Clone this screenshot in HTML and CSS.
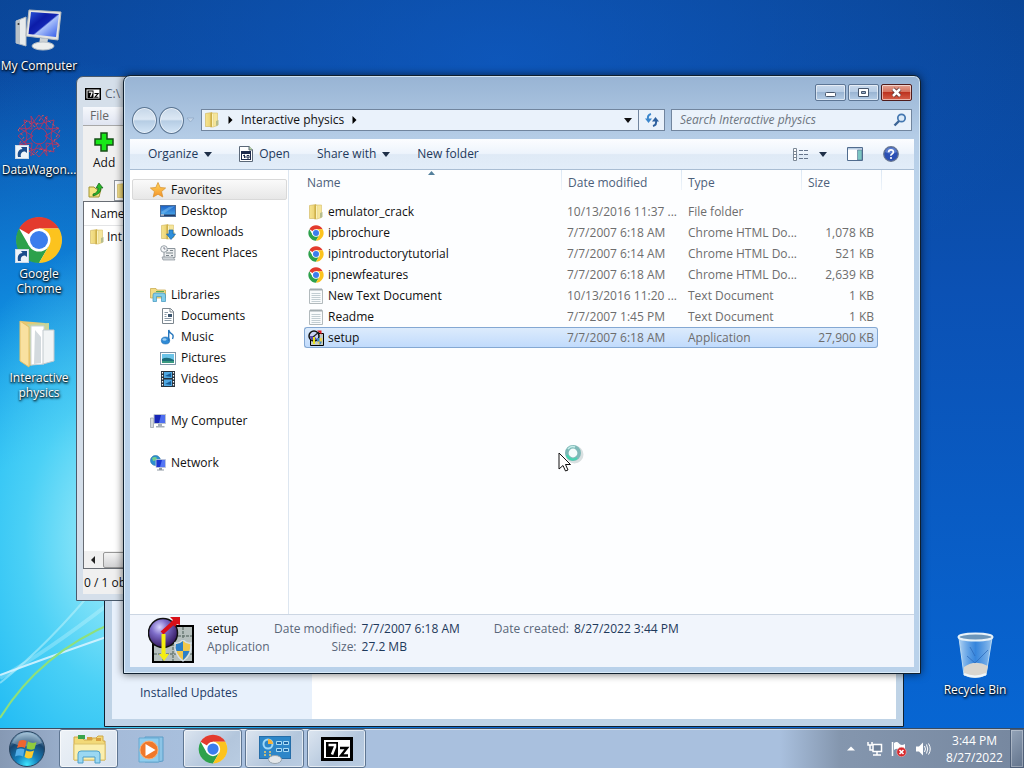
FILE: index.html
```
<!DOCTYPE html>
<html lang="en">
<head>
<meta charset="utf-8">
<title>Interactive physics</title>
<link rel="stylesheet" href="styles.css">
</head>
<body>
<svg class="sprite" width="0" height="0" aria-hidden="true">
  <defs>
    <linearGradient id="gFolder" x1="0" x2="1"><stop offset="0" stop-color="#f6e48e"/><stop offset=".6" stop-color="#eed77c"/><stop offset="1" stop-color="#dcc05c"/></linearGradient>
    <linearGradient id="gBlue" x1="0" y1="0" x2="1" y2="1"><stop offset="0" stop-color="#2a55d8"/><stop offset=".35" stop-color="#0c1ca8"/><stop offset=".52" stop-color="#1326b4"/><stop offset=".56" stop-color="#a9c0fa"/><stop offset="1" stop-color="#2e57e8"/></linearGradient>
    <linearGradient id="gSky" x1="0" y1="0" x2="0" y2="1"><stop offset="0" stop-color="#1c5fc4"/><stop offset="1" stop-color="#4fb0ee"/></linearGradient>
    <radialGradient id="gBall" cx=".38" cy=".3" r=".7"><stop offset="0" stop-color="#d8d4ff"/><stop offset=".4" stop-color="#7d6cc8"/><stop offset="1" stop-color="#33185e"/></radialGradient>
    <radialGradient id="gOrb" cx=".5" cy=".95" r=".9"><stop offset="0" stop-color="#3fe6ff"/><stop offset=".35" stop-color="#1481bd"/><stop offset=".75" stop-color="#17456f"/><stop offset="1" stop-color="#7fa6c4"/></radialGradient>
    <linearGradient id="gStar" x1="0" y1="0" x2="0" y2="1"><stop offset="0" stop-color="#ffd95c"/><stop offset="1" stop-color="#f5912a"/></linearGradient>
    <linearGradient id="gBin" x1="0" x2="1"><stop offset="0" stop-color="#d9eefc" stop-opacity=".8"/><stop offset=".5" stop-color="#6fb0ee" stop-opacity=".45"/><stop offset="1" stop-color="#c5e2f8" stop-opacity=".75"/></linearGradient>
  </defs>
  <symbol id="chrome" viewBox="0 0 48 48">
    <circle cx="24" cy="24" r="22.500" fill="#fff"/>
    <path d="M24 24L4.100 12.500A23 23 0 0 1 43.900 12.500L24 12.500Z" fill="#e33b2e"/>
    <path d="M4.100 12.500A23 23 0 0 0 24 47L34 29.800L24 24L14 29.800Z" fill="#2da14c"/>
    <path d="M43.900 12.500A23 23 0 0 1 24 47L34 29.800L24 12.500Z" fill="#fcc31e"/>
    <circle cx="24" cy="24" r="11.500" fill="#fff"/><circle cx="24" cy="24" r="9" fill="#3b7ded"/>
  </symbol>
  <symbol id="folder" viewBox="0 0 16 16">
    <path d="M7 1H13.500V13.500L9 15H7Z" fill="#f5e59a" stroke="#d9c06a" stroke-width=".6"/>
    <path d="M1.500 1.500L8 .5V14.500L1.500 14.500Z" fill="url(#gFolder)" stroke="#cfb45a" stroke-width=".6"/>
    <path d="M6.500 1V15.500L9.500 14V1.500Z" fill="#cdb04a"/><path d="M8 1.500H9.500V14L8 15Z" fill="#faf1bd"/>
    <path d="M12 9L14.500 8V13L12 14Z" fill="#b7bd8c"/>
  </symbol>
  <symbol id="textdoc" viewBox="0 0 16 16">
    <path d="M1.500 1.500H14.500V15.500H1.500Z" fill="#f9fbfc" stroke="#b2babd"/>
    <path d="M3 0V3M5 0V3M7 0V3M9 0V3M11 0V3M13 0V3" stroke="#8b979c" stroke-width=".8"/>
    <path d="M3.500 5.500H12.500M3.500 7.500H12.500M3.500 9.500H12.500M3.500 11.500H12.500M3.500 13.500H12.500" stroke="#b4c1c7" stroke-width=".8"/>
  </symbol>
  <symbol id="setup" viewBox="0 0 48 48">
    <rect x="5" y="10" width="40" height="36" fill="#b5bfbd" stroke="#000" stroke-width="2"/>
    <path d="M6 20H44M6 29H44M6 38H44M15 11V45M25 11V45M35 11V45" stroke="#6d7d78" stroke-width="1.500" stroke-dasharray="3 1"/>
    <circle cx="15" cy="17" r="14.500" fill="url(#gBall)" stroke="#111" stroke-width="1.500"/>
    <path d="M14 17L25 7" stroke="#d81018" stroke-width="4"/><path d="M22 1H32V9L29 8L27 11L23 6L25 4Z" fill="#d81018"/>
    <path d="M15.500 18V39" stroke="#f5ee10" stroke-width="4"/><path d="M11 38H21L16 45Z" fill="#f5ee10"/>
    <path d="M35 24Q39 28 43 27Q44 39 35 45Q26 39 27 27Q31 28 35 24Z" fill="#f2c84a" stroke="#d5dfe8" stroke-width="1.500"/>
    <path d="M35 25Q31 28.500 28 28Q27 32 28.500 35H35ZM35 35H41.500Q39 41 35 44Z" fill="#2c7fc9"/>
  </symbol>
  <symbol id="setup-small" viewBox="0 0 16 16">
    <path d="M2.500 3.500H15.500V15.500H2.500Z" fill="#c3cbc6" stroke="#000"/>
    <circle cx="6" cy="6" r="5" fill="#c9d2f4" stroke="#111" stroke-width="1.500"/><path d="M2 6A4 4 0 0 0 9 9L6 6Z" fill="#5b4aa8"/>
    <path d="M5 7L11 2" stroke="#222" stroke-width="1.200"/><path d="M9 .5H13.500V4.500Z" fill="#e01b22"/>
    <path d="M6 7V14" stroke="#e8e41a" stroke-width="2"/><path d="M9 8H14V12Q13 14 11.500 15Q9 13 9 8Z" fill="#f0d24a"/><path d="M9 8H11.500V11.500H14Q13 14 11.500 15V11.500H9Z" fill="#3a83c6"/>
  </symbol>
  <symbol id="pc" viewBox="0 0 48 44">
    <path d="M1 13L11 9V38L1 35Z" fill="#e8ebec" stroke="#b4bcc4"/><path d="M1 13L5 12V36L1 35Z" fill="#b9c1c8"/><circle cx="3.500" cy="16" r="1" fill="#333"/>
    <path d="M14 2L46 4L43 32L11 28Z" fill="#e4e5e3" stroke="#b8bcbe"/><path d="M16 4L44 6L41 29L13.500 26Z" fill="url(#gBlue)"/>
    <path d="M25 30L33 31L32 37H24Z" fill="#cdd2d5"/><ellipse cx="28" cy="38" rx="11" ry="4" fill="#eceeee" stroke="#b8c0c6"/>
  </symbol>
  <symbol id="shortcut" viewBox="0 0 14 14">
    <rect x=".5" y=".5" width="13" height="13" fill="#eef4fa" stroke="#cbd9e6"/><path d="M3 12C2 7 4 4 7.500 4L6 2H12V8L10 6.500C7 6.500 5 8.500 6 12Z" fill="#1c4e8c"/>
  </symbol>
  <symbol id="sevenz" viewBox="0 0 32 24">
    <rect x="1.500" y="1.500" width="29" height="21" fill="#fff" stroke="#000" stroke-width="3"/><rect x="5" y="5" width="12" height="15" fill="#000"/>
    <path d="M7.500 8H14V10L11 17.500" fill="none" stroke="#fff" stroke-width="2.500"/><path d="M19 11H26L20 18.500H27" fill="none" stroke="#000" stroke-width="2.400"/>
  </symbol>
</svg>

<main class="desktop">
  <svg class="wallpaper-streaks" viewBox="0 0 130 170" aria-hidden="true">
    <path d="M0 125Q50 85 98 26" stroke="#c6f6fc" stroke-opacity=".5" fill="none" stroke-width="2"/>
    <path d="M0 120Q45 95 110 45" stroke="#d7fbff" stroke-opacity=".3" fill="none" stroke-width="4"/>
    <path d="M0 117Q60 95 115 76" stroke="#d5f3ff" fill="none" stroke-width="2" stroke-opacity=".9"/>
    <path d="M0 160Q40 95 115 64" stroke="#8fe07a" fill="none" stroke-width="2"/>
  </svg>

  <nav class="shortcuts" aria-label="Desktop">
    <button class="shortcut"><span class="shortcut-art"><svg class="art-pc"><use href="#pc"/></svg></span><span>My Computer</span></button>
    <button class="shortcut"><span class="shortcut-art">
      <svg class="art" viewBox="0 0 48 48"><g fill="none" stroke="#a3396a" stroke-width="1">
        <path d="M24 3L35 17L45 24L33 34L24 45L13 34L3 24L15 15Z"/><path d="M9 8L24 12L39 8L36 24L39 40L24 36L9 40L12 24Z"/><path d="M16 4L24 18L32 4L31 17L44 16L30 24L44 33L31 31L32 44L24 31L16 44L17 31L4 33L18 24L4 16L17 17Z"/><circle cx="24" cy="24" r="8"/><path d="M3 18L12 9L20 15L28 3L36 11L45 18L39 29L45 33L34 40L25 37L19 43L10 36L4 32L9 25Z" stroke="#cc5060" stroke-dasharray="3 2"/></g></svg>
      <svg class="arrow"><use href="#shortcut"/></svg></span><span>DataWagon...</span></button>
    <button class="shortcut"><span class="shortcut-art"><svg class="art"><use href="#chrome"/></svg><svg class="arrow"><use href="#shortcut"/></svg></span><span>Google Chrome</span></button>
    <button class="shortcut"><span class="shortcut-art"><svg class="art" viewBox="0 0 48 48">
      <path d="M6 1L30 3V42L14 46L6 41Z" fill="#e8c872"/><path d="M12 4L34 3V35L16 44Z" fill="#c8d59a"/><path d="M16 6H29V44L16 45Z" fill="#fff" stroke="#cbd2d6"/><path d="M28 10H39V41L28 44Z" fill="#f1f4f5" stroke="#c1c9ce"/><path d="M20 10L26 17V43L19 44Z" fill="#d3dade"/><path d="M5 1L14 7V47L5 41Z" fill="#f9e1a0" stroke="#e3c068"/></svg></span><span>Interactive physics</span></button>
  </nav>

  <button class="shortcut recycle"><span class="shortcut-art"><svg class="art" viewBox="0 0 48 48">
    <path d="M8 6L13 43Q24 48 35 43L41 6Z" fill="url(#gBin)" stroke="#b9d9f2"/><path d="M13 35Q24 27 37 34L35 43Q24 48 13 43Z" fill="#d9d6cf"/><path d="M16 24L24 31L37 18M19 15L24 24" stroke="#2a66b8" stroke-opacity=".7" fill="none"/><ellipse cx="24.500" cy="5" rx="17" ry="3.500" fill="#6c96ba" stroke="#e6f1f8" stroke-width="2"/><path d="M13 42Q24 47 35 42" stroke="#eef6fb" stroke-width="2" fill="none"/></svg></span><span>Recycle Bin</span></button>

  <section class="window panel-window" aria-label="Programs">
    <aside class="panel-side"><a class="panel-link" href="#updates">Installed Updates</a></aside>
    <div class="panel-main"></div>
  </section>

  <section class="window zip-window" aria-label="7-Zip">
    <header class="zip-title"><svg class="zip-logo"><use href="#sevenz"/></svg><span>C:\</span></header>
    <div class="zip-menu"><button class="plain">File</button></div>
    <div class="zip-tools"><button class="zip-add"><svg width="20" height="20" viewBox="0 0 20 20"><path d="M7 1H13V7H19V13H13V19H7V13H1V7H7Z" fill="#18e818" stroke="#174d17" stroke-width="1.500"/></svg>Add</button></div>
    <div class="zip-path"><svg width="16" height="16" viewBox="0 0 16 16"><path d="M1 5H6L8 7H13L11 15H1Z" fill="#f4e580" stroke="#a29434"/><path d="M5 12Q10 11 10 6H8L11 1L15 6H13Q13 12 5 14Z" fill="#28b828" stroke="#145f18" stroke-width=".7"/></svg><span class="zip-field"><svg width="16" height="16"><use href="#folder"/></svg></span></div>
    <div class="zip-list">
      <div class="zip-head">Name</div>
      <div class="zip-item"><svg width="16" height="16"><use href="#folder"/></svg>Int</div>
      <div class="zip-scroll"><span class="zip-left"></span><span class="zip-thumb"></span></div>
    </div>
    <footer class="zip-status">0 / 1 ob</footer>
  </section>

  <section class="window explorer" aria-label="Interactive physics">
    <header class="caption">
      <button class="cap" aria-label="Minimize"><svg width="13" height="11" viewBox="0 0 13 11"><rect x="1.500" y="5.500" width="10" height="4" rx="1" fill="#fff" stroke="#46566c"/></svg></button>
      <button class="cap" aria-label="Maximize"><svg width="13" height="11" viewBox="0 0 13 11"><path d="M1.500 1.500H11.500V9.500H1.500Z" fill="#fff" stroke="#46566c"/><path d="M4.500 4.500H8.500V6.500H4.500Z" fill="#9ab0cc" stroke="#46566c"/></svg></button>
      <button class="cap cap-close" aria-label="Close"><svg width="13" height="11" viewBox="0 0 13 11"><path d="M3 2L10 9M10 2L3 9" stroke="#5c3030" stroke-width="4"/><path d="M3 2L10 9M10 2L3 9" stroke="#fff" stroke-width="2.500"/></svg></button>
    </header>

    <div class="navbar">
      <div class="travel">
        <button class="round" aria-label="Back"></button><button class="round" aria-label="Forward"></button>
        <svg width="9" height="6" viewBox="0 0 9 6"><path d="M1 1H8L4.500 5Z" fill="#c3d5e8" stroke="#8fa8c4" stroke-width=".7"/></svg>
      </div>
      <div class="address">
        <svg width="16" height="16"><use href="#folder"/></svg>
        <svg class="crumb" width="5" height="8" viewBox="0 0 5 8"><path d="M.5 0L4.500 4L.5 8Z"/></svg>
        <button class="plain">Interactive physics</button>
        <svg class="crumb" width="5" height="8" viewBox="0 0 5 8"><path d="M.5 0L4.500 4L.5 8Z"/></svg>
        <button class="plain drop" aria-label="Previous locations"><svg width="8" height="5" viewBox="0 0 8 5"><path d="M0 0H8L4 5Z" fill="#111"/></svg></button>
        <button class="refresh" aria-label="Refresh"><svg width="16" height="16" viewBox="0 0 16 16"><path d="M7 2Q3 3 4 8" fill="none" stroke="#3a86cc" stroke-width="2"/><path d="M1 6.500H8L4.500 11Z" fill="#3a86cc"/><path d="M9 14Q13 13 12 8" fill="none" stroke="#2c5f9e" stroke-width="2"/><path d="M8 9.500H15L11.500 5Z" fill="#2c5f9e"/></svg></button>
      </div>
      <label class="search"><input type="search" placeholder="Search Interactive physics" aria-label="Search Interactive physics"><svg width="14" height="14" viewBox="0 0 14 14"><circle cx="8.500" cy="5" r="3.700" fill="#dcebf9" stroke="#4477b0" stroke-width="1.700"/><path d="M6 8L1.500 12.500" stroke="#3c6495" stroke-width="2.400"/></svg></label>
    </div>

    <div class="client">
      <div class="toolbar">
        <button class="tool">Organize<svg width="8" height="5" viewBox="0 0 8 5"><path d="M0 0H8L4 5Z" fill="#1e2f48"/></svg></button>
        <button class="tool tool-open"><svg width="14" height="16" viewBox="0 0 14 16"><path d="M.5 .5H10L13.500 4V15.500H.5Z" fill="#fff" stroke="#5b6878"/><path d="M10 0V4H14" fill="#b9d6a2" stroke="#5b6878"/><path d="M2 5H12V14H2Z" fill="#1d2a4c"/><path d="M3 8H11V13H3Z" fill="#fff"/><path d="M4 10L5.500 9V12M8 9.500H10V12H8ZM6 11H7" fill="none" stroke="#1d2a4c"/></svg>Open</button>
        <button class="tool">Share with<svg width="8" height="5" viewBox="0 0 8 5"><path d="M0 0H8L4 5Z" fill="#1e2f48"/></svg></button>
        <button class="tool">New folder</button>
        <span class="toolbar-end">
          <button class="plain view" aria-label="Change your view"><svg width="16" height="13" viewBox="0 0 16 13"><path d="M.5 .5H3.500V12.500H.5ZM.5 3.500H3.500M.5 6.500H3.500M.5 9.500H3.500" fill="#fff" stroke="#7c8896"/><path d="M6 2.500H10M11 2.500H15M6 6.500H10M11 6.500H15M6 10.500H10M11 10.500H15" stroke="#66758c"/></svg><svg width="8" height="5" viewBox="0 0 8 5"><path d="M0 0H8L4 5Z" fill="#1e2f48"/></svg></button>
          <button class="plain" aria-label="Preview pane"><svg width="16" height="14" viewBox="0 0 16 14"><path d="M.5 .5H15.500V13.500H.5Z" fill="#fff" stroke="#516c8e"/><path d="M1 1H15V2.500H1Z" fill="#b7cbe2"/><path d="M10.500 3H15V13H10.500Z" fill="#7cc6c2" stroke="#516c8e" stroke-width=".6"/></svg></button>
          <button class="plain" aria-label="Help"><svg width="16" height="16" viewBox="0 0 16 16"><circle cx="8" cy="8" r="7.300" fill="#2c50b4" stroke="#66758f" stroke-width="1.200"/><path d="M2 6A6.300 6.300 0 0 1 14 6Q8 9 2 6Z" fill="#7d9be0" opacity=".6"/><path d="M5.600 6.200Q5.700 3.800 8 3.800T10.400 6Q10.300 7.200 9 7.900T8 9.800" fill="none" stroke="#fff" stroke-width="1.700"/><circle cx="8" cy="12" r="1.100" fill="#fff"/></svg></button>
        </span>
      </div>

      <div class="body">
        <nav class="tree" aria-label="Navigation pane">
          <ul>
            <li><a class="node root is-hot" href="#favorites"><svg viewBox="0 0 16 16"><path d="M8 .5L10.200 5.500L15.600 6L11.500 9.600L12.800 15L8 12.200L3.200 15L4.500 9.600L.4 6L5.800 5.500Z" fill="url(#gStar)" stroke="#d99432" stroke-width=".8"/></svg>Favorites</a></li>
            <li><a class="node" href="#desktop"><svg viewBox="0 0 16 16"><rect x=".5" y="2.500" width="15" height="11" fill="url(#gSky)" stroke="#4c6b93"/><path d="M1 11.500H15V13H1Z" fill="#233b66"/><path d="M1 9L9 4L15 3V3L3 11Z" fill="#7ec3f5" opacity=".5"/><path d="M1 12H4" stroke="#fff"/></svg>Desktop</a></li>
            <li><a class="node" href="#downloads"><svg viewBox="0 0 16 16"><use href="#folder"/><path d="M9 6H13V10H15.500L11 15.500L6.500 10H9Z" fill="#2e8fdb" stroke="#1a65ac" stroke-width=".7"/></svg>Downloads</a></li>
            <li><a class="node" href="#recent"><svg viewBox="0 0 16 16"><path d="M4 3.500H15V12.500H4Z" fill="#eceeef" stroke="#8b949b"/><path d="M6 5.500H8M10 5.500H13M6 8H13M6 10.500H9M11 10.500H13" stroke="#7b858c" stroke-width="1.200"/><path d="M2 12H13L15 15H3Z" fill="#cfd4d8" stroke="#8b949b" stroke-width=".7"/><circle cx="4" cy="4" r="3.300" fill="#f6f8f9" stroke="#98a1a8"/><path d="M4 2V4H5.500" stroke="#667" fill="none" stroke-width=".8"/></svg>Recent Places</a></li>
          </ul>
          <ul>
            <li><a class="node root" href="#libraries"><svg viewBox="0 0 16 16"><path d="M.500 1.500H6L7 3H15.500V11H.5Z" fill="#f3dc84" stroke="#c6a545" stroke-width=".7"/><path d="M6 4.500H14" stroke="#5aab59"/><path d="M3 8Q3 6 5 6H13Q15.500 6 15.500 8V14.500H11.500V9.500H6.500V14.500H3Z" fill="#82cdea" stroke="#3d94bd" stroke-width=".7"/></svg>Libraries</a></li>
            <li><a class="node" href="#documents"><svg viewBox="0 0 16 16"><path d="M2.500 .5H10.500L13.500 3.500V15.500H2.500Z" fill="#fff" stroke="#7c868e"/><path d="M10 .5V4H13.500" fill="none" stroke="#7c868e"/><path d="M4.500 4.500H8M4.500 6.500H6.500M4.500 8.500H6.500M4.500 10.500H11.500M4.500 12.500H11.500" stroke="#8b9aa6"/><path d="M8 6H12V9H8Z" fill="#3c556f"/></svg>Documents</a></li>
            <li><a class="node" href="#music"><svg viewBox="0 0 16 16"><ellipse cx="5.500" cy="11.500" rx="4.200" ry="3.500" fill="#2f8bd6" stroke="#1e6cb2" stroke-width=".6"/><path d="M8.700 12V1Q9.500 4 12 5.200Q14 6.500 12.500 10" fill="none" stroke="#2777bd" stroke-width="1.400"/><ellipse cx="4.500" cy="10.500" rx="2" ry="1.200" fill="#9ccdf2"/></svg>Music</a></li>
            <li><a class="node" href="#pictures"><svg viewBox="0 0 16 16"><rect x=".5" y="2.500" width="15" height="12" fill="#fff" stroke="#7f96a8"/><path d="M2 4H14V13H2Z" fill="#6cc4e8"/><path d="M2 9Q7 6 14 10V13H2Z" fill="#1c6c79"/><path d="M2 11H14V13H2Z" fill="#3a9a80"/></svg>Pictures</a></li>
            <li><a class="node" href="#videos"><svg viewBox="0 0 16 16"><rect x="1" y="0" width="14" height="16" fill="#27313b"/><path d="M4 1H12V7H4Z" fill="#4fa8e2"/><path d="M4 8.500H12V15H4Z" fill="#4fa8e2"/><path d="M5 5L11 2V6ZM5 13L11 10V14Z" fill="#175c96"/><path d="M2.500 1V16M13.500 1V16" stroke="#fff" stroke-dasharray="1.500 1.500" stroke-width="1.200"/></svg>Videos</a></li>
          </ul>
          <ul><li><a class="node root" href="#computer"><svg viewBox="0 0 16 16"><path d="M.500 5H3.500V14.500H.5Z" fill="#d5dade" stroke="#8f9aa4" stroke-width=".7"/><path d="M4 1.500H15.500V10.500H4Z" fill="#1726b6" stroke="#bcc4cf"/><path d="M11 2H15V10H9Z" fill="#4d6df0"/><path d="M8 11H12V13H14.500V14.500H6V13H8Z" fill="#a6afb8"/></svg>My Computer</a></li></ul>
          <ul><li><a class="node root" href="#network"><svg viewBox="0 0 16 16"><circle cx="5.500" cy="5.500" r="5" fill="#2c8fd0" stroke="#2270a8" stroke-width=".6"/><path d="M2 3Q5 1 7 3Q6 6 3 6Z" fill="#74cf8c"/><path d="M6 4.500H15.500V12.500H6Z" fill="#1a35d2" stroke="#c7cfd8" stroke-width=".8"/><path d="M12 5L15 5V12H10Z" fill="#5577f4"/><path d="M9 13H12V14.500H14V15.500H7V14.500H9Z" fill="#8f9aa4"/></svg>Network</a></li></ul>
        </nav>

        <div class="listing">
          <table class="files">
            <colgroup><col class="c-name"><col class="c-date"><col class="c-type"><col class="c-size"><col class="c-end"></colgroup>
            <thead><tr><th>Name<svg class="sort" width="7" height="4" viewBox="0 0 7 4"><path d="M0 4L3.500 0L7 4Z" fill="#54809c"/></svg></th><th>Date modified</th><th>Type</th><th class="size-head">Size</th><th class="end"></th></tr></thead>
            <tbody>
              <tr><td><span class="file"><svg><use href="#folder"/></svg>emulator_crack</span></td><td>10/13/2016 11:37 ...</td><td>File folder</td><td></td></tr>
              <tr><td><span class="file"><svg><use href="#chrome"/></svg>ipbrochure</span></td><td>7/7/2007 6:18 AM</td><td>Chrome HTML Do...</td><td>1,078 KB</td></tr>
              <tr><td><span class="file"><svg><use href="#chrome"/></svg>ipintroductorytutorial</span></td><td>7/7/2007 6:14 AM</td><td>Chrome HTML Do...</td><td>521 KB</td></tr>
              <tr><td><span class="file"><svg><use href="#chrome"/></svg>ipnewfeatures</span></td><td>7/7/2007 6:18 AM</td><td>Chrome HTML Do...</td><td>2,639 KB</td></tr>
              <tr><td><span class="file"><svg><use href="#textdoc"/></svg>New Text Document</span></td><td>10/13/2016 11:20 ...</td><td>Text Document</td><td>1 KB</td></tr>
              <tr><td><span class="file"><svg><use href="#textdoc"/></svg>Readme</span></td><td>7/7/2007 1:45 PM</td><td>Text Document</td><td>1 KB</td></tr>
              <tr class="selected"><td><span class="file"><svg><use href="#setup-small"/></svg>setup</span></td><td>7/7/2007 6:18 AM</td><td>Application</td><td>27,900 KB</td></tr>
            </tbody>
          </table>
        </div>
      </div>

      <footer class="details">
        <svg class="details-art"><use href="#setup"/></svg>
        <div class="details-name"><strong>setup</strong><span>Application</span></div>
        <dl><dt>Date modified:</dt><dd>7/7/2007 6:18 AM</dd><dt>Size:</dt><dd>27.2 MB</dd></dl>
        <dl><dt>Date created:</dt><dd>8/27/2022 3:44 PM</dd></dl>
      </footer>
    </div>
  </section>

  <svg class="pointer" width="28" height="30" viewBox="0 0 28 30" aria-hidden="true">
    <circle cx="16.500" cy="10.500" r="6.500" fill="none" stroke="#889a9c" stroke-opacity=".3" stroke-width="5"/><circle cx="15" cy="9" r="6.200" fill="#f4fcfb" stroke="#7fb9b8" stroke-width="3.600"/><path d="M9 11A6.200 6.200 0 0 0 19 14" fill="none" stroke="#45d6b2" stroke-width="2"/><path d="M10 5A6.200 6.200 0 0 1 17 3" fill="none" stroke="#c5eeea" stroke-width="1.500"/>
    <path d="M1 9V25L5 21.500L7.500 27L10 26L7.500 20.500H12.500Z" fill="#fff" stroke="#111"/>
  </svg>
</main>

<footer class="taskbar">
  <button class="start" aria-label="Start"><svg width="38" height="38" viewBox="0 0 38 38"><circle cx="19" cy="19" r="17.500" fill="url(#gOrb)" stroke="#28435e"/><path d="M4 13A16 16 0 0 1 34 13Q19 20 4 13Z" fill="#dceaf2" opacity=".35"/><path d="M11 11Q15 9 18.500 11L17 18Q13.500 16 9 18Z" fill="#ee6530"/><path d="M20 11.500Q24 14 28.500 12L26.500 19Q22.500 20.500 18.500 18.500Z" fill="#8fcb3d"/><path d="M8.500 19.500Q13 17.500 16.500 19.500L15 26.500Q11 24.500 7 26.500Z" fill="#52aee8"/><path d="M18 20.500Q22 22.500 26 20.500L24 27.500Q20 29.500 16.500 27Z" fill="#fccb2d"/></svg></button>
  <div class="tasks">
    <button class="task is-open is-bright" aria-label="Windows Explorer"><svg width="34" height="32" viewBox="0 0 34 32"><path d="M2 4H10L12 7H20V5H24L26 3H31V8H33V27H2Z" fill="#f2d978" stroke="#cfa849"/><path d="M6 2H13V6H6Z" fill="#3aa44d"/><path d="M15 4H20V7H15ZM24 5H29V8H24Z" fill="#d9a040"/><path d="M2 11H33V27H2Z" fill="#fbefae" stroke="#dcc26a"/><path d="M6 30V21Q6 18 9 18H25Q28 18 28 21V30H23V24H11V30Z" fill="#9bd8f2" stroke="#4d9fca"/></svg></button>
    <button class="task" aria-label="Media Player"><svg width="28" height="28" viewBox="0 0 28 28"><path d="M8 2H26V26L20 27H8Z" fill="#8cc4e6" stroke="#5b9cc7"/><path d="M2 3H22V27H2Z" fill="#8fcdee" stroke="#66a9d0"/><circle cx="12" cy="15" r="9" fill="#f0782a" stroke="#f9b076"/><path d="M8.500 9V21L18.500 15Z" fill="#fff"/></svg></button>
    <button class="task is-open" aria-label="Google Chrome"><svg width="30" height="30"><use href="#chrome"/></svg></button>
    <button class="task is-open" aria-label="Control Panel"><svg width="34" height="30" viewBox="0 0 34 30"><rect x="1.500" y="2.500" width="31" height="22" fill="#2d86c8" stroke="#256da8"/><circle cx="10" cy="10" r="4.500" fill="none" stroke="#9ed8f8" stroke-width="2"/><path d="M10 10V5A5 5 0 0 1 15 10Z" fill="#f5b23a"/><path d="M18.500 7.500H23.500V10.500H18.500ZM25.500 7.500H30.500V10.500H25.500ZM18.500 14.500H23.500V17.500H18.500ZM25.500 14.500H30.500V17.500H25.500Z" fill="#1d66a6" stroke="#a9dcf5"/><path d="M6 18H8M11 18H13M6 21H8M11 21H13" stroke="#f1ce68" stroke-width="1.500"/><ellipse cx="17" cy="25.500" rx="6.500" ry="4" fill="#e3e7ea" stroke="#97a3ad"/></svg></button>
    <button class="task is-open" aria-label="7-Zip"><svg width="32" height="24"><use href="#sevenz"/></svg></button>
  </div>
  <div class="tray">
    <button class="plain" aria-label="Show hidden icons"><svg width="8" height="5" viewBox="0 0 8 5"><path d="M0 4.500L4 .5L8 4.500Z" fill="#fff"/></svg></button>
    <button class="plain" aria-label="Network"><svg width="16" height="16" viewBox="0 0 16 16"><path d="M1 1V4H5V1M3 4V9H6" fill="none" stroke="#fff" stroke-width="1.500"/><path d="M6 3.500H14.500V10.500H6Z" fill="#6d7f97" stroke="#fff" stroke-width="1.500"/><path d="M10 11V14M6 14H14" stroke="#fff" stroke-width="1.500"/></svg></button>
    <button class="plain" aria-label="Action Center"><svg width="16" height="16" viewBox="0 0 16 16"><path d="M1.500 1V15" stroke="#fff" stroke-width="1.500"/><path d="M3 2Q6 0 8 2.500T14 3V9Q10 10 8 8.500T3 9Z" fill="#fff"/><circle cx="10.500" cy="11" r="4.700" fill="#d7272b" stroke="#f1b0ad" stroke-width=".6"/><path d="M8.500 9L12.500 13M12.500 9L8.500 13" stroke="#fff" stroke-width="1.600"/></svg></button>
    <button class="plain" aria-label="Volume"><svg width="16" height="16" viewBox="0 0 16 16"><path d="M1 5.500H4L8 1.500V14.500L4 10.500H1Z" fill="#fff"/><path d="M9.500 5Q11.500 8 9.500 11M11.500 3.500Q14 8 11.500 12.500M13.500 2.500Q17 8 13.500 13.500" fill="none" stroke="#fff" stroke-width="1"/></svg></button>
    <button class="clock"><time>3:44 PM</time><time>8/27/2022</time></button>
  </div>
  <button class="peek" aria-label="Show desktop"></button>
</footer>
</body>
</html>
```
FILE: styles.css
```
* { box-sizing: border-box; }
body {
  margin: 0;
  height: 100vh;
  display: flex;
  flex-direction: column;
  overflow: hidden;
  font: 12px/16px "Open Sans", "Noto Sans", sans-serif;
  color: #111;
}
button {
  font: inherit;
  color: inherit;
  background: none;
  border: 0;
  padding: 0;
  margin: 0;
}
svg { display: block; flex: none; }
.sprite { position: absolute; }
.plain { display: flex; align-items: center; }

/* Desktop */
.desktop {
  position: relative;
  flex: 1;
  min-height: 0;
  overflow: hidden;
  background:
    radial-gradient(ellipse 190px 300px at 120px 540px, rgba(180, 243, 250, .95), rgba(110, 226, 248, .6) 50%, rgba(40, 190, 245, 0)),
    radial-gradient(ellipse 420px 560px at 60px 620px, #16b6f3 30%, rgba(16, 150, 232, .7) 62%, rgba(10, 100, 205, 0)),
    radial-gradient(ellipse 560px 280px at 500px 60px, rgba(16, 96, 205, .6), rgba(10, 80, 180, 0)),
    linear-gradient(180deg, #0a4596, #0b51b4 40%, #0766d3);
}
.wallpaper-streaks {
  position: absolute;
  left: 0;
  bottom: 0;
  width: 130px;
  height: 170px;
}
.shortcuts {
  position: absolute;
  left: 0;
  top: 8px;
  width: 78px;
  display: flex;
  flex-direction: column;
}
.shortcut {
  height: 104px;
  display: flex;
  flex-direction: column;
  align-items: center;
  color: #fff;
  line-height: 15px;
  text-shadow: 0 1px 2px #000, 1px 1px 3px #000;
}
.shortcut-art {
  position: relative;
  width: 48px;
  height: 50px;
  flex: none;
}
.art { width: 48px; height: 48px; }
.art-pc { width: 48px; height: 44px; }
.arrow {
  position: absolute;
  left: 0;
  bottom: 3px;
  width: 14px;
  height: 14px;
}
.recycle {
  position: absolute;
  right: 12px;
  bottom: -8px;
  width: 74px;
}

/* Windows */
.window {
  position: absolute;
  border: 1px solid #10202f;
  border-radius: 7px 7px 0 0;
  display: flex;
}
.panel-window {
  left: 104px;
  right: 120px;
  top: 120px;
  bottom: 1px;
  padding: 7px;
  background: #bfd3e6;
}
.panel-side {
  width: 200px;
  background: #e8f1fc;
  display: flex;
  align-items: flex-end;
  padding: 0 28px 18px;
}
.panel-link { color: #1c3a66; text-decoration: none; }
.panel-main { flex: 1; background: #fff; }

.zip-window {
  left: 76px;
  right: 600px;
  top: 76px;
  bottom: 127px;
  padding: 6px;
  flex-direction: column;
  background: #d5dfea;
  border-color: #4a5a6c;
}
.zip-title {
  height: 24px;
  display: flex;
  align-items: center;
  gap: 4px;
  padding-left: 2px;
  padding-bottom: 2px;
  color: #5b6470;
}
.zip-logo { width: 16px; height: 12px; }
.zip-menu {
  display: flex;
  height: 19px;
  padding-left: 7px;
  color: #666;
  background: linear-gradient(#f6f8fc, #dfe4f1);
  border-bottom: 1px solid #a8a8a8;
}
.zip-tools { height: 53px; background: #f0f0f0; padding: 6px 10px 0; display: flex; }
.zip-add { display: flex; flex-direction: column; align-items: center; gap: 3px; }
.zip-path {
  height: 22px;
  display: flex;
  align-items: center;
  gap: 10px;
  padding-left: 5px;
  background: #f0f0f0;
}
.zip-field { flex: 1; height: 21px; padding: 2px 1px; background: #fff; border: 1px solid #8f959c; }
.zip-list {
  flex: 1;
  display: flex;
  flex-direction: column;
  background: #fff;
  border: 1px solid #686d74;
}
.zip-head { height: 24px; padding: 4px 7px; border-bottom: 1px solid #e3e4e6; }
.zip-item { display: flex; gap: 2px; padding: 3px 5px; }
.zip-scroll { margin-top: auto; height: 17px; display: flex; align-items: center; background: #f0f0f0; }
.zip-left { margin: 0 8px 0 7px; border: 4px solid transparent; border-left: 0; border-right-color: #222; }
.zip-thumb { flex: 1; height: 16px; border: 1px solid #979797; border-radius: 2px; background: linear-gradient(#f4f4f4, #d2d2d4); }
.zip-status { height: 25px; padding: 6px 1px; background: #f0f0f0; }

/* Explorer */
.explorer {
  left: 123px;
  right: 103px;
  top: 75px;
  bottom: 54px;
  padding: 0 6px 6px;
  flex-direction: column;
  background: linear-gradient(#98b4d4, #b4cce6 60px, #bad2ea 100px, #b9d1ea);
  box-shadow: inset 0 0 0 1px rgba(232, 246, 255, .7), 0 0 8px rgba(0, 0, 0, .6);
}
.caption { display: flex; justify-content: flex-end; gap: 2px; padding: 8px 2px 0; }
.cap {
  width: 31px;
  height: 17px;
  display: grid;
  place-items: center;
  border: 1px solid #5d7695;
  border-radius: 2px;
  background: linear-gradient(#c8d9ec, #b6cce4 48%, #9ab5d3 50%, #b5cde6);
  box-shadow: inset 0 0 0 1px rgba(255, 255, 255, .55);
}
.cap-close {
  border-color: #4f1c1c;
  background: linear-gradient(#e3a292, #d4705c 48%, #bd3320 50%, #d6614b);
}
.navbar { display: flex; align-items: center; height: 38px; padding: 0 2px; gap: 6px; }
.travel { display: flex; align-items: center; gap: 2px; width: 63px; }
.round {
  width: 27px;
  height: 27px;
  border: 1px solid #5b7592;
  border-radius: 50%;
  background: linear-gradient(#c5d6e8, #dce8f4 45%, #b6cde4 52%, #d3e5f6);
  box-shadow: inset 0 0 0 1px rgba(255, 255, 255, .6);
}
.address, .search {
  height: 22px;
  display: flex;
  align-items: center;
  border: 1px solid #71859e;
  background: #eaf2fb;
}
.address { flex: 1; padding-left: 2px; gap: 8px; }
.drop { margin-left: auto; margin-right: -2px; }
.refresh { width: 26px; height: 20px; border-left: 1px solid #71859e; display: grid; place-items: center; }
.search { width: 241px; padding: 0 4px 0 8px; }
.search input {
  flex: 1;
  min-width: 0;
  padding: 0;
  border: 0;
  background: none;
  outline: 0;
  font: italic 12px/16px "Open Sans", "Noto Sans", sans-serif;
}
.search input::placeholder { color: #6d7580; opacity: 1; }

.client { flex: 1; min-height: 0; display: flex; flex-direction: column; background: #fff; }
.toolbar {
  height: 31px;
  display: flex;
  align-items: center;
  gap: 27px;
  padding: 0 15px 0 18px;
  color: #1e395b;
  background: linear-gradient(#fcfdff, #edf4fc 48%, #dfeaf6 52%, #e2edf9);
  border-bottom: 1px solid #a9bdd3;
}
.tool { display: flex; align-items: center; gap: 6px; }
.toolbar-end { margin-left: auto; display: flex; align-items: center; gap: 20px; }
.view { gap: 10px; }

.body { flex: 1; min-height: 0; display: flex; }
.tree { width: 159px; padding: 9px 1px 0 2px; border-right: 1px solid #dde6f0; }
.tree ul { list-style: none; margin: 0 0 21px; padding: 0; }
.node {
  height: 21px;
  display: flex;
  align-items: center;
  gap: 5px;
  padding-left: 28px;
  color: #111;
  text-decoration: none;
}
.node svg { width: 16px; height: 16px; }
.node.root { padding-left: 18px; }
.node.is-hot {
  padding-left: 17px;
  border: 1px solid #d9d9d9;
  border-radius: 2px;
  background: linear-gradient(#fafafa, #e7e7e7);
}
.listing { flex: 1; min-width: 0; padding-left: 15px; background: #fdfeff; }
.files { width: 578px; table-layout: fixed; border-collapse: separate; border-spacing: 0; }
.c-name { width: 258px; }
.c-date, .c-type { width: 120px; }
.c-size { width: 76px; }
.c-end { width: 4px; }
.files th {
  position: relative;
  height: 31px;
  padding: 5px 0 0 6px;
  vertical-align: top;
  text-align: left;
  font-weight: 400;
  color: #4c607a;
  background: linear-gradient(#dbe7f4, #eef4fa) right top / 1px 20px no-repeat;
}
.files th:first-child { padding-left: 3px; }
.files .size-head { background: none; }
.files .end { padding: 0; }
.sort { position: absolute; left: 50%; top: 1px; margin-left: -5px; }
.files td {
  height: 21px;
  padding: 0 4px 0 5px;
  white-space: nowrap;
  color: #6d6d6d;
}
.files td:nth-child(3) { padding-left: 6px; }
.files td:nth-child(4) { text-align: right; }
.files td:first-child { padding-left: 4px; color: #111; }
.file { display: flex; align-items: center; gap: 4px; }
.file svg { width: 16px; height: 16px; }
.selected td {
  border: 1px solid #84a8d3;
  border-width: 1px 0;
  background: linear-gradient(#dcebfc, #c1dbfc);
}
.files .selected td:first-child { padding-left: 3px; border-left-width: 1px; border-radius: 3px 0 0 3px; }
.files .selected td:last-child { padding-right: 3px; border-right-width: 1px; border-radius: 0 3px 3px 0; }

.details {
  height: 53px;
  display: flex;
  padding: 1px 18px;
  color: #1e395b;
  background: #f1f5fc;
  border-top: 1px solid #ccd6e3;
  line-height: 18px;
}
.details-art { width: 48px; height: 48px; margin-right: 11px; }
.details-name { width: 67px; padding-top: 4px; color: #5a6779; }
.details-name strong { display: block; font-weight: 400; color: #111; }
.details dl {
  margin: 0 34px 0 0;
  padding-top: 4px;
  display: grid;
  grid-template-columns: auto auto;
  grid-auto-rows: 18px;
  column-gap: 5px;
}
.details dt { text-align: right; color: #5a6779; }
.details dd { margin: 0; }

.pointer { position: absolute; left: 558px; top: 444px; }

/* Taskbar */
.taskbar {
  height: 40px;
  display: flex;
  border-top: 1px solid #3b4c60;
  background: linear-gradient(90deg, #8699b4, #a4bad8 100px, #a9c0de 200px, #a9c0de 780px, #8496ae 840px, #76879f);
  box-shadow: inset 0 1px rgba(255, 255, 255, .5);
}
.start { width: 59px; padding-left: 8px; display: flex; align-items: center; }
.tasks { display: flex; gap: 3px; }
.task { width: 59px; display: grid; place-items: center; border: 1px solid transparent; border-radius: 3px; }
.is-open {
  border-color: #5f7692;
  background: linear-gradient(135deg, #dce5f0, #b3c6dc 60%, #b9cce2);
  box-shadow: inset 0 0 0 1px rgba(255, 255, 255, .6);
}
.is-bright { background: linear-gradient(135deg, #edf2f7, #d8e2ee); }
.tray { margin-left: auto; display: flex; align-items: center; gap: 8px; color: #fff; }
.tray .plain:first-child { margin-right: 4px; }
.clock { width: 71px; line-height: 17px; text-align: center; }
.clock time { display: block; }
.peek {
  width: 14px;
  border: 1px solid #4f6079;
  background: linear-gradient(135deg, #93a3b8, #63748c);
  box-shadow: inset 0 0 0 1px rgba(255, 255, 255, .3);
}
```
